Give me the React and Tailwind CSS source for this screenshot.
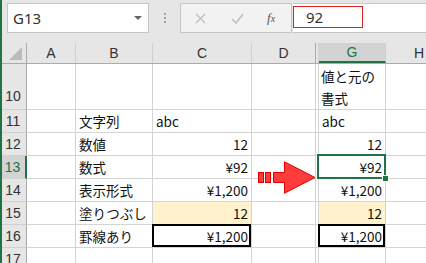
import React from "react";

const COLS = [
  { key: "A", w: "w-[49px]" },
  { key: "B", w: "w-[77px]" },
  { key: "C", w: "w-[99px]" },
  { key: "D", w: "w-[64px]" },
  { key: "EF", w: "w-[3px]" },
  { key: "G", w: "w-[67px]" },
  { key: "H", w: "w-[67px]" },
];

const ROWS = [
  { n: 10, h: "h-[46px]", B: "", C: "", G: ["値と元の", "書式"] },
  { n: 11, h: "h-[23px]", B: "文字列", C: "abc", G: "abc", left: true },
  { n: 12, h: "h-[23px]", B: "数値", C: "12", G: "12" },
  { n: 13, h: "h-[23px]", B: "数式", C: "¥92", G: "¥92", selected: true },
  { n: 14, h: "h-[23px]", B: "表示形式", C: "¥1,200", G: "¥1,200" },
  { n: 15, h: "h-[23px]", B: "塗りつぶし", C: "12", G: "12", fill: true },
  { n: 16, h: "h-[23px]", B: "罫線あり", C: "¥1,200", G: "¥1,200", boxed: true },
  { n: 17, h: "h-[23px]", B: "", C: "", G: "" },
];

const cellFont = { fontFamily: '"Noto Sans CJK JP", "Liberation Sans", sans-serif' };

function Arrow() {
  return (
    <svg className="absolute left-[257px] top-[161px]" width="60" height="33" viewBox="0 0 60 33">
      <rect x="1.5" y="11.5" width="5" height="10" fill="#ff3b3b" stroke="#e00000" />
      <rect x="8.5" y="11.5" width="5" height="10" fill="#ff3b3b" stroke="#e00000" />
      <path d="M16.5 11.5 H27.5 V0.8 L58 16.5 L27.5 32.2 V21.5 H16.5 Z" fill="#ff3b3b" stroke="#e00000" />
    </svg>
  );
}

function Cell({ row, col }) {
  const base = `${col.w} shrink-0 box-border border-r border-b border-[#d4d4d4] text-[13.5px] text-[#111] leading-[22px]`;
  if (col.key === "EF") return <div className={`${col.w} shrink-0 box-border border-r border-[#d4d4d4] border-b`} />;
  let content = null;
  let align = "justify-end pr-[3px]";
  let extra = "";
  if (col.key === "B") {
    content = row.B;
    align = "justify-start pl-[3px]";
  }
  if (col.key === "C" || col.key === "G") {
    const v = row[col.key];
    if (Array.isArray(v)) {
      return (
        <div className={`${base} flex flex-col justify-center pl-[2px] leading-[21px]`} style={cellFont}>
          <span>{v[0]}</span>
          <span>{v[1]}</span>
        </div>
      );
    }
    content = v;
    if (row.left) align = "justify-start pl-[3px]";
    if (row.fill) extra = "bg-[#fff2cc]";
  }
  const isSel = row.selected && col.key === "G";
  return (
    <div className={`${base} relative flex items-center ${align} ${extra} ${isSel ? "z-10" : ""}`} style={cellFont}>
      {content}
      {row.boxed && (col.key === "C" || col.key === "G") && (
        <div className="absolute -left-[1px] -top-[1px] right-0 bottom-0 border-2 border-black" />
      )}
      {isSel && (
        <>
          <div className="absolute -left-[2px] -top-[2px] right-[-1px] bottom-[-1px] border-2 border-[#217346]" />
          <div className="absolute right-[-4px] bottom-[-4px] w-[7px] h-[7px] bg-[#217346] border border-white" />
        </>
      )}
    </div>
  );
}

export default function App() {
  return (
    <div className="relative w-[426px] h-[263px] overflow-hidden bg-white" style={{ fontFamily: '"Liberation Sans", sans-serif' }}>
      {/* formula bar */}
      <div className="h-[43px] bg-[#e6e6e6] flex items-start pt-[3px] pl-[7px]">
        <div className="w-[142px] h-[30px] bg-white border border-[#c6c6c6] flex items-center justify-between pl-[5px] pr-[6px]">
          <span className="text-[15px] text-[#333]" style={{ fontFamily: '"Noto Sans", sans-serif' }}>G13</span>
          <span className="w-0 h-0 border-l-[4px] border-r-[4px] border-t-[4px] border-l-transparent border-r-transparent border-t-[#666]" />
        </div>
        <div className="w-[31px] h-[30px] flex flex-col items-center justify-center gap-[2px]">
          <span className="w-[2px] h-[2px] bg-[#a0a0a0]" />
          <span className="w-[2px] h-[2px] bg-[#a0a0a0]" />
          <span className="w-[2px] h-[2px] bg-[#a0a0a0]" />
        </div>
        <div className="w-[112px] h-[30px] bg-[#f2f2f2] border border-[#c6c6c6] flex items-center">
          <svg className="ml-[14px]" width="11" height="11" viewBox="0 0 11 11">
            <path d="M1 1 L10 10 M10 1 L1 10" stroke="#c0c0c0" strokeWidth="1.4" />
          </svg>
          <svg className="ml-[25px]" width="13" height="11" viewBox="0 0 13 11">
            <path d="M1 6 L5 10 L12 1" stroke="#c0c0c0" strokeWidth="1.6" fill="none" />
          </svg>
          <span className="ml-[23px] text-[13px] italic text-[#555]" style={{ fontFamily: '"Liberation Serif", serif' }}>
            f<span className="text-[10px]">x</span>
          </span>
        </div>
        <div className="ml-[1px] flex-1 h-[30px] bg-white border-y border-[#c6c6c6] pt-[2px]">
          <div className="w-[70px] h-[22px] border-[1.5px] border-[#e02020] flex items-center pl-[12px] text-[15px] text-[#333]" style={{ fontFamily: '"Noto Sans", sans-serif' }}>
            92
          </div>
        </div>
      </div>

      {/* column headers */}
      <div className="flex h-[21px] bg-[#e6e6e6] border-b border-[#ababab]">
        <div className="w-[27px] shrink-0 box-border border-r border-[#ababab] relative">
          <svg className="absolute left-[9px] top-[4px]" width="13" height="13" viewBox="0 0 13 13">
            <path d="M13 0 L13 13 L0 13 Z" fill="#bcbcbc" />
          </svg>
        </div>
        {COLS.map((c) => (
          <div
            key={c.key}
            className={`${c.w} shrink-0 box-border border-r ${c.key === "D" ? "border-[#ababab]" : "border-[#d0d0d0]"} flex items-center justify-center text-[14px] text-[#333] ${
              c.key === "G" ? "bg-[#d3d3d3] border-b-2 border-b-[#217346] text-[#217346]" : ""
            }`}
          >
            {c.key === "EF" ? "" : c.key}
          </div>
        ))}
      </div>

      {/* rows */}
      {ROWS.map((r) => (
        <div key={r.n} className={`flex ${r.h}`}>
          <div
            className={`w-[27px] shrink-0 box-border border-b border-[#d0d0d0] flex justify-center text-[14px] ${
              r.selected ? "bg-[#d3d3d3] border-r-2 border-r-[#217346] text-[#217346]" : "bg-[#e6e6e6] border-r border-r-[#ababab] text-[#333]"
            } ${r.n === 10 ? "items-end pb-[2px]" : "items-center"}`}
          >
            {r.n}
          </div>
          {COLS.map((c) => (
            <Cell key={c.key} row={r} col={c} />
          ))}
        </div>
      ))}

      <Arrow />
      <div className="absolute left-0 top-0 w-[2px] h-full bg-[#217346]" />
    </div>
  );
}
